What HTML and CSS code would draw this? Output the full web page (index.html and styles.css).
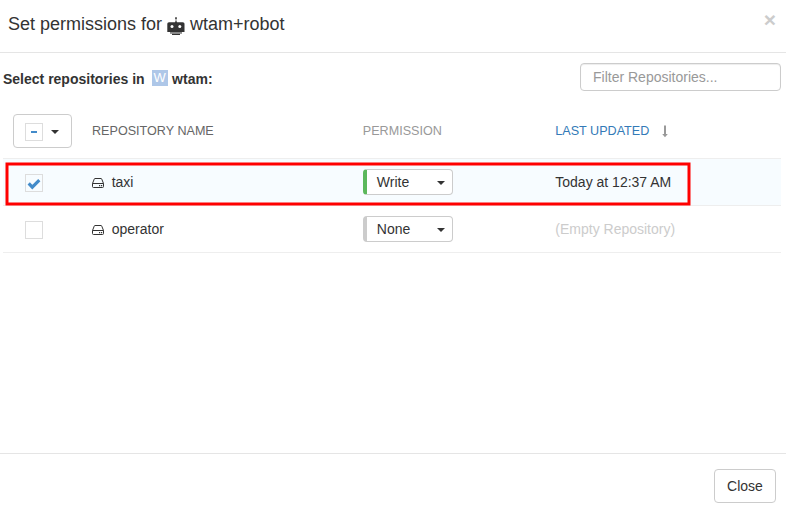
FILE: index.html
```html
<!DOCTYPE html>
<html lang="en">
<head>
<meta charset="utf-8">
<title>Set permissions</title>
<link rel="stylesheet" href="styles.css">
</head>
<body>
<div class="modal">
  <header class="modal-header">
    <h4 class="title"><span>Set permissions for</span>
      <svg class="robot" width="18" height="20" viewBox="0 0 18 20">
        <path fill="#777" d="M8.500 3h1v3h-1z"/>
        <path fill="#333" d="M8.200 1.200h1.600v1.800H8.200zM8 5.500h2v.7h5.800q1.700 0 1.700 1.600V16H.3V7.800Q.3 6.200 2 6.200h6z"/>
        <circle cx="5" cy="10.500" r="1.500" fill="#fff"/><circle cx="12.800" cy="10.500" r="1.500" fill="#fff"/>
        <path fill="#888" d="M3 16h12v1.800H3z"/><path fill="#333" d="M5 17.800h8V19H5z"/>
      </svg>
      <span>wtam+robot</span></h4>
    <span class="dismiss">×</span>
  </header>
  <main class="modal-body">
    <div class="toolbar">
      <div class="caption"><span>Select repositories in</span><span class="avatar">W</span><span>wtam:</span></div>
      <input class="filter" type="text" placeholder="Filter Repositories...">
    </div>
    <div class="table">
      <div class="row head">
        <div><button class="check-menu"><span class="box"><i class="dash"></i></span><i class="caret"></i></button></div>
        <div class="name-head">REPOSITORY NAME</div>
        <div>PERMISSION</div>
        <div class="sorted">LAST UPDATED
          <svg class="arrow" width="6" height="13" viewBox="0 0 6 13"><path fill="#999" d="M2 .5h2V9h1.800L3 12.200.2 9H2z"/></svg>
        </div>
      </div>
      <div class="row checked">
        <div class="check-cell"><span class="box"><svg width="14" height="12" viewBox="0 0 14 12"><path fill="none" stroke="#428bca" stroke-width="3.200" d="M1.700 5.400l3.600 3.700L12.300 2.100"/></svg></span></div>
        <div class="repo"><svg width="12" height="10" viewBox="0 0 12 10"><path fill="none" stroke="#333" d="M.5 5.500 2.200 1.200Q2.400.5 3 .5h6q.6 0 .8.7l1.700 4.300v3q0 1-1 1h-9q-1 0-1-1zh11"/><path fill="#333" d="M7 7h1.200v1.200H7zM9 7h1.200v1.200H9z"/></svg>taxi</div>
        <div><button class="permission write"><span>Write</span><i class="caret"></i></button></div>
        <div>Today at 12:37 AM</div>
      </div>
      <div class="row">
        <div class="check-cell"><span class="box"></span></div>
        <div class="repo"><svg width="12" height="10" viewBox="0 0 12 10"><path fill="none" stroke="#333" d="M.5 5.500 2.200 1.200Q2.400.5 3 .5h6q.6 0 .8.7l1.700 4.300v3q0 1-1 1h-9q-1 0-1-1zh11"/><path fill="#333" d="M7 7h1.200v1.200H7zM9 7h1.200v1.200H9z"/></svg>operator</div>
        <div><button class="permission"><span>None</span><i class="caret"></i></button></div>
        <div class="empty">(Empty Repository)</div>
      </div>
      <svg class="highlight" width="688" height="46" viewBox="0 0 688 46"><rect x="3" y="3" width="682" height="40" fill="none" stroke="#f00" stroke-width="3"/></svg>
    </div>
  </main>
  <footer class="modal-footer"><button class="close">Close</button></footer>
</div>
</body>
</html>
```

FILE: styles.css
```css
* { box-sizing: border-box; }
body {
  margin: 0;
  background: #fff;
  color: #333;
  font: 14px/20px "Liberation Sans", Arial, sans-serif;
}
button, input { font: inherit; color: inherit; margin: 0; background: #fff; border: 1px solid #ccc; border-radius: 4px; }
svg { display: block; flex: none; }
.modal { height: 515px; display: flex; flex-direction: column; }
.modal-header {
  height: 53px;
  padding: 0 10px 5px 8px;
  display: flex;
  justify-content: space-between;
  align-items: center;
  border-bottom: 1px solid #e5e5e5;
}
.title { margin: 0; display: flex; align-items: center; font-size: 18px; font-weight: 400; }
.robot { margin: 4px 5px 0 5px; }
.dismiss { font-size: 21px; font-weight: 700; line-height: 21px; color: #ccc; margin-top: -8px; }
.modal-body { flex: 1; padding: 10px 5px 0 3px; }
.toolbar { display: flex; justify-content: space-between; height: 41px; }
.caption { display: flex; height: 32px; align-items: center; font-weight: 700; }
.avatar {
  width: 16px;
  height: 16px;
  margin: -2px 4.500px 0 7px;
  background: #aec7e8;
  color: #fff;
  font-size: 13px;
  font-weight: 400;
  line-height: 16px;
  text-align: center;
}
.filter { width: 201px; height: 28px; padding: 0 12px; box-shadow: inset 0 1px 1px rgba(0,0,0,.075); }
.filter::placeholder { color: #999; opacity: 1; }
.table { position: relative; }
.row {
  display: grid;
  grid-template-columns: 89px 270.800px 192.500px 1fr;
  align-items: center;
  height: 47px;
  border-bottom: 1px solid #eee;
}
.row.head { height: 55px; color: #999; font-size: 12.600px; }
.row.checked { background: #f7fcff; }
.row .name-head { color: #666; }
.row .sorted { display: flex; align-items: center; color: #337ab7; }
.arrow { margin-left: 13px; }
.check-menu { width: 59px; height: 34px; margin-left: 10px; padding: 0 0 0 11px; display: flex; align-items: center; }
.box { width: 18px; height: 18px; display: flex; align-items: center; justify-content: center; border: 1px solid #ddd; background: #fff; }
.box svg { margin-top: 2px; }
.checked .box { background: transparent; }
.check-menu .box { margin-top: 2px; }
.dash { width: 6px; height: 2px; background: #428bca; }
.caret { border: 4px solid transparent; border-top-color: #333; border-bottom: 0; }
.check-menu .caret { margin: 2px 0 0 8px; }
.check-cell { padding: 2px 0 0 22px; }
.repo { display: flex; align-items: center; }
.repo svg { margin: 2px 7.700px 0 0; }
.permission {
  width: 90px;
  height: 26px;
  padding: 0 7px 0 10px;
  display: flex;
  align-items: center;
  justify-content: space-between;
  border-left: 4px solid #ccc;
}
.permission.write { border-left-color: #5cb85c; }
.permission .caret { margin-top: 2px; }
.empty { color: #ccc; }
.highlight { position: absolute; left: 1px; top: 57px; }
.modal-footer { height: 62px; padding: 15px 10px 0; display: flex; justify-content: flex-end; border-top: 1px solid #e5e5e5; }
.close { width: 62px; height: 34px; padding: 0; }
```
